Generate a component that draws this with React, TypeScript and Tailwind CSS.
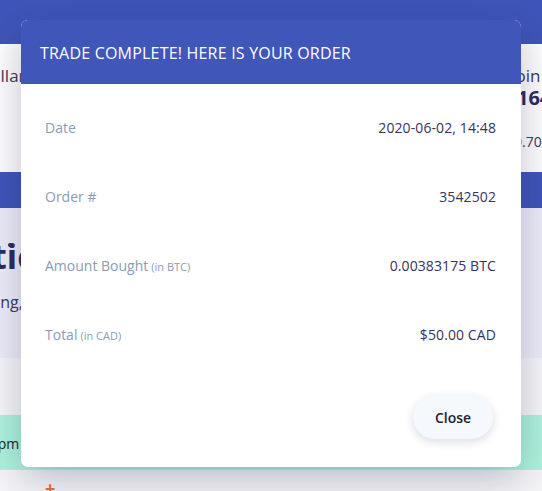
import React from "react";

const Row = ({ label, sub, value }: { label: string; sub?: string; value: string }) => (
  <div className="flex h-[69px] items-center justify-between pl-[24px] pr-[25px]">
    <div className="text-[14px] text-[#8c9bb1]">
      {label}
      {sub && <span className="ml-[3px] text-[11px]">{sub}</span>}
    </div>
    <div className="text-[14px] tracking-[0.1px] text-[#37325e]">{value}</div>
  </div>
);

export default function App() {
  return (
    <div className="relative h-[491px] w-[542px] overflow-hidden bg-white" style={{ fontFamily: '"Open Sans", "Noto Sans", sans-serif' }}>
      {/* background page */}
      <div className="flex flex-col">
        <div className="h-[44px] bg-[#3f55b9]" />
        <div className="relative h-[128px] bg-white">
          <div className="pt-[19px] ml-[-22px] text-[17px] text-[#3b3b58]">Dollar</div>
          <div className="absolute left-[486px] top-0 flex flex-col">
            <div className="mt-[19px] text-[17px] text-[#3b3b58] whitespace-nowrap">Bitcoin</div>
          </div>
          <div className="absolute left-[517px] top-[39px] text-[20px] font-bold text-[#2e2a5c] whitespace-nowrap">164</div>
          <div className="absolute left-[514px] top-[87px] text-[14px] text-[#3b3b58] whitespace-nowrap">0.70</div>
        </div>
        <div className="h-[36px] bg-[#3f55b9]" />
        <div className="relative h-[150px] bg-[#eeeef9]">
          <div className="absolute left-[8px] top-[35px] h-[4px] w-[4px] rounded-full bg-[#2e2a5c]" />
          <div className="ml-[-104px] pt-[28px] text-[34px] font-bold leading-[40px] text-[#2e2a5c] whitespace-nowrap">Statistics</div>
          <div className="ml-[-42px] mt-[14px] text-[16px] text-[#3b3b58] whitespace-nowrap">Pending,</div>
        </div>
        <div className="h-[57px] bg-[#f7f7f9]" />
        <div className="flex h-[55px] items-center border-b border-[#d8e4df] bg-[#aef4dc]">
          <div className="ml-[-38px] mt-[2px] text-[14px] text-[#222] whitespace-nowrap">14:48pm</div>
        </div>
        <div className="relative h-[21px] bg-[#f6f6f8]">
          <div className="absolute left-[45px] top-[9px] text-[18px] font-bold leading-[18px] text-[#f26b3a]">+</div>
        </div>
      </div>

      {/* modal */}
      <div className="absolute left-[21px] top-[20px] flex h-[447px] w-[500px] flex-col overflow-hidden rounded-[7px] bg-white shadow-[0_12px_40px_rgba(30,30,80,0.28)]">
        <div className="flex h-[64px] items-center bg-[#4056b9] pl-[19px] pt-[1px] text-[16px] tracking-[0.2px] text-white">
          TRADE COMPLETE! HERE IS YOUR ORDER
        </div>
        <div className="flex flex-col pt-[9px]">
          <Row label="Date" value="2020-06-02, 14:48" />
          <Row label="Order #" value="3542502" />
          <Row label="Amount Bought" sub="(in BTC)" value="0.00383175 BTC" />
          <Row label="Total" sub="(in CAD)" value="$50.00 CAD" />
        </div>
        <div className="flex justify-end pr-[28px] pt-[26px]">
          <button className="h-[44px] w-[80px] rounded-full bg-[#f5f8fc] text-[14px] font-semibold text-[#1f2430] shadow-[0_3px_10px_rgba(30,40,80,0.16)]">
            Close
          </button>
        </div>
      </div>
    </div>
  );
}
